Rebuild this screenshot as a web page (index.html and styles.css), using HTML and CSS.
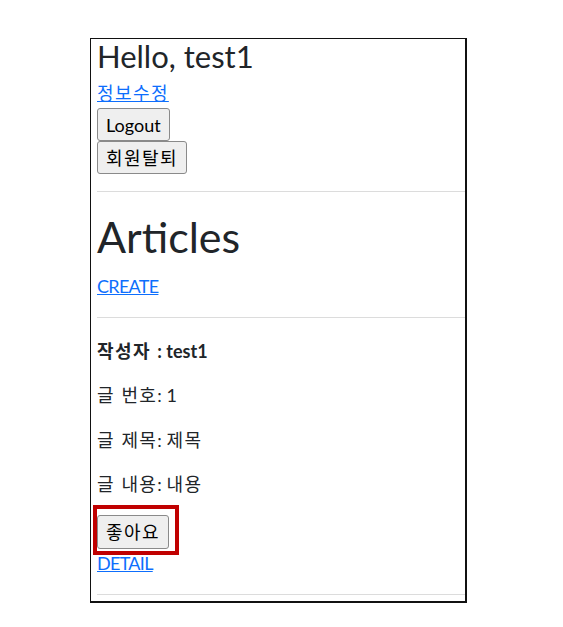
FILE: index.html
```html
<!DOCTYPE html>
<html lang="ko">
<head>
<meta charset="utf-8">
<title>Articles</title>
<link rel="stylesheet" href="styles.css">
</head>
<body>
<div class="frame">
  <h2 class="hello">Hello, test1</h2>
  <a class="link first-link" href="#"><span class="ko">정보수정</span></a>
  <form class="form"><button class="btn" type="button">Logout</button></form>
  <form class="form second"><button class="btn" type="button"><span class="ko">회원탈퇴</span></button></form>
  <hr class="rule rule-top">
  <h1 class="title">Articles</h1>
  <a class="link caps create" href="#">CREATE</a>
  <hr class="rule rule-mid">
  <p class="line author"><span class="ko">작성자 </span>: test1</p>
  <p class="line"><span class="ko">글 번호</span>: 1</p>
  <p class="line"><span class="ko">글 제목</span>: <span class="ko">제목</span></p>
  <p class="line"><span class="ko">글 내용</span>: <span class="ko">내용</span></p>
  <form class="form like"><button class="btn" type="button"><span class="ko">좋아요</span></button></form>
  <a class="link caps detail" href="#">DETAIL</a>
  <hr class="rule rule-bottom">
  <div class="highlight"></div>
</div>
</body>
</html>
```

FILE: styles.css
```css
html, body {
  margin: 0;
  padding: 0;
  background: #ffffff;
}

body {
  font-family: "Lato", "Noto Sans CJK KR", sans-serif;
  color: #212529;
}

.frame {
  position: relative;
  box-sizing: border-box;
  margin: 38px 0 0 90px;
  width: 377px;
  height: 565px;
  border: 1px solid #111;
  border-right-width: 2px;
  border-bottom-width: 2px;
  padding-left: 6px;
}

.ko {
  font-family: "Noto Sans CJK KR", "Lato", sans-serif;
  letter-spacing: 1.4px;
  line-height: 1;
}

.hello {
  margin: 0;
  font-size: 31px;
  font-weight: 400;
  line-height: 34px;
}

.link {
  display: block;
  width: max-content;
  font-size: 18px;
  line-height: 26px;
  color: #0d6efd;
  text-decoration: underline;
}

.caps {
  letter-spacing: -0.7px;
}

.first-link {
  margin-top: 7px;
}

.form {
  margin: 2px 0 0;
}

.form.second {
  margin-top: 0;
}

.btn {
  display: block;
  box-sizing: border-box;
  height: 33px;
  padding: 0 8px;
  font-family: "Lato", "Noto Sans CJK KR", sans-serif;
  font-size: 18px;
  color: #000;
  background: #efefef;
  border: 1px solid #8a8a8a;
  border-radius: 3px;
}

.rule {
  margin: 0;
  border: 0;
  border-top: 1px solid #dcdcdc;
  height: 0;
}

.rule-top {
  margin-top: 17px;
}

.title {
  margin: 20px 0 0;
  font-size: 43px;
  font-weight: 400;
  line-height: 50px;
}

.create {
  margin-top: 11px;
}

.rule-mid {
  margin-top: 18px;
}

.line {
  margin: 18.33px 0 0;
  font-size: 18px;
  line-height: 26px;
}

.author {
  margin-top: 20px;
  font-weight: 700;
}

.form.like {
  margin-top: 18px;
}

.like .btn {
  height: 34px;
}

.detail {
  margin-top: 1px;
}

.rule-bottom {
  margin-top: 18px;
}

.highlight {
  position: absolute;
  left: 2px;
  top: 466px;
  width: 86px;
  height: 50px;
  box-sizing: border-box;
  border: 4px solid #c00000;
}
```
